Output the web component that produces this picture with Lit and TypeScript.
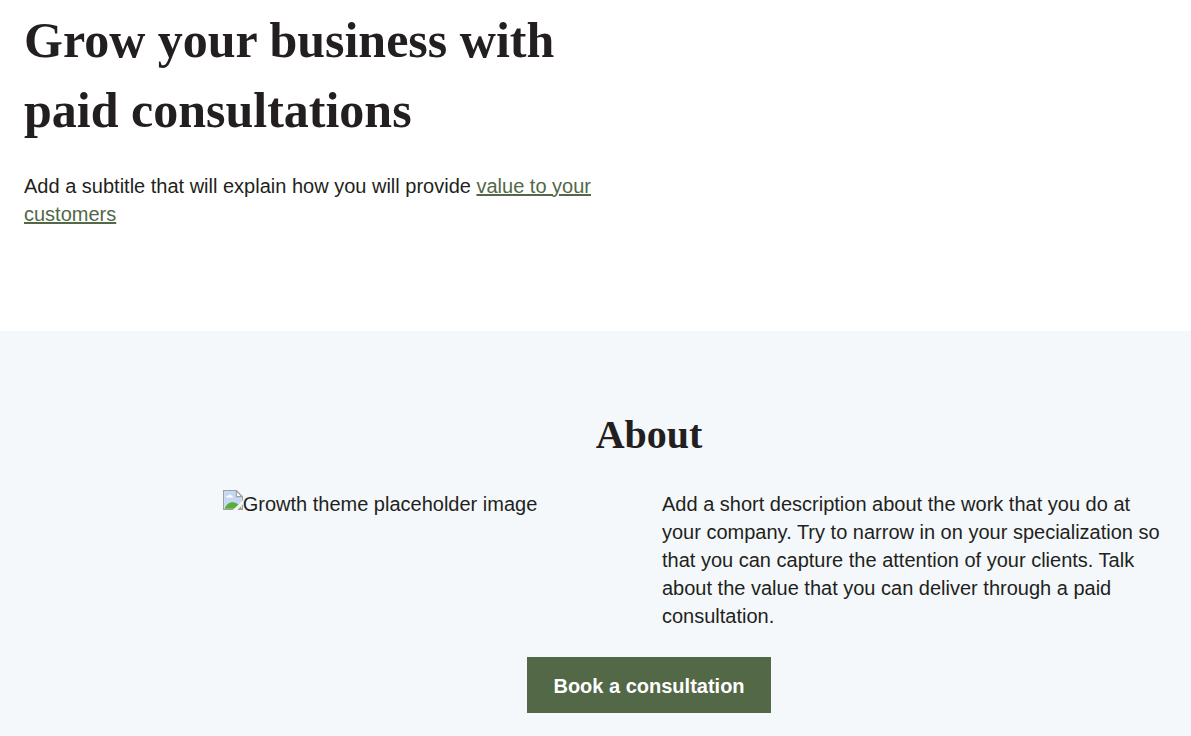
import { LitElement, html, css } from "lit";
import { customElement } from "lit/decorators.js";

@customElement("app-root")
export class AppRoot extends LitElement {
  static styles = css`
    :host {
      display: flex;
      flex-direction: column;
      min-height: 100vh;
      background: #ffffff;
      color: #231f20;
      font: 20px/28px "Liberation Sans", Arial, sans-serif;
    }
    h1,
    h2,
    p {
      margin: 0;
    }
    h1,
    h2 {
      font-family: "Liberation Serif", "Times New Roman", serif;
      font-weight: 700;
    }
    h1 {
      font-size: 50px;
      line-height: 70px;
    }
    h2 {
      font-size: 40px;
      line-height: 56px;
    }
    .hero {
      padding: 5px 24px 103px;
    }
    .intro {
      display: flex;
      flex-direction: column;
      gap: 27px;
      max-width: 600px;
    }
    .link {
      color: #526847;
      text-decoration: underline;
    }
    .about {
      flex: 1;
      display: flex;
      flex-direction: column;
      align-items: center;
      gap: 27px;
      padding: 76px 17px 23px 124px;
      box-sizing: border-box;
      background: #f4f8fb;
    }
    .columns {
      display: grid;
      grid-template-columns: 1fr 1fr;
      gap: 26px;
      align-self: stretch;
    }
    .placeholder {
      display: flex;
      justify-content: center;
      align-items: flex-start;
    }
    .glyph {
      width: 20px;
      height: 20px;
      flex: none;
    }
    .book {
      border: 0;
      padding: 15px 26px 13px;
      background: #526847;
      color: #ffffff;
      font: 700 20px/28px "Liberation Sans", Arial, sans-serif;
      cursor: pointer;
    }
  `;

  render() {
    return html`
      <section class="hero">
        <div class="intro">
          <h1>Grow your business with paid consultations</h1>
          <p>
            Add a subtitle that will explain how you will provide
            <a class="link" href="#about">value to your customers</a>
          </p>
        </div>
      </section>
      <section class="about" id="about">
        <h2>About</h2>
        <div class="columns">
          <div class="placeholder">
            <svg class="glyph" viewBox="0 0 20 20" aria-hidden="true">
              <path d="M.5.5H13.5L19.5 6.5V19.5H.5Z" fill="#fff" />
              <path d="M1.6 1.6H12.8V7H18.4V18.4H1.6Z" fill="#c3d9f7" />
              <path d="M3 7.5C3 6 4.5 5.6 5.2 6C5.6 4.2 8.2 4.2 8.6 6C10 5.8 10.4 7.5 9.8 7.5Z" fill="#fff" />
              <path d="M1.5 18.8C3 15 6 12.3 9.5 12.3C13 12.3 16.5 14.5 18.5 18.8Z" fill="#5aad35" />
              <path d="M.6 19.4V.6H13.3L19.4 6.7V19.4Z" fill="none" stroke="#a0a0a0" stroke-width="1.3" />
              <path d="M13.3.8V6.7H19.2Z" fill="#fff" stroke="#a0a0a0" stroke-width="1.2" />
              <path d="M20 10.2V14.2L14.3 20H9.8L14.8 15.2Z" fill="#f4f8fb" />
            </svg>
            <span>Growth theme placeholder image</span>
          </div>
          <p>
            Add a short description about the work that you do at your company.
            Try to narrow in on your specialization so that you can capture the
            attention of your clients. Talk about the value that you can deliver
            through a paid consultation.
          </p>
        </div>
        <button class="book" type="button">Book a consultation</button>
      </section>
    `;
  }
}
